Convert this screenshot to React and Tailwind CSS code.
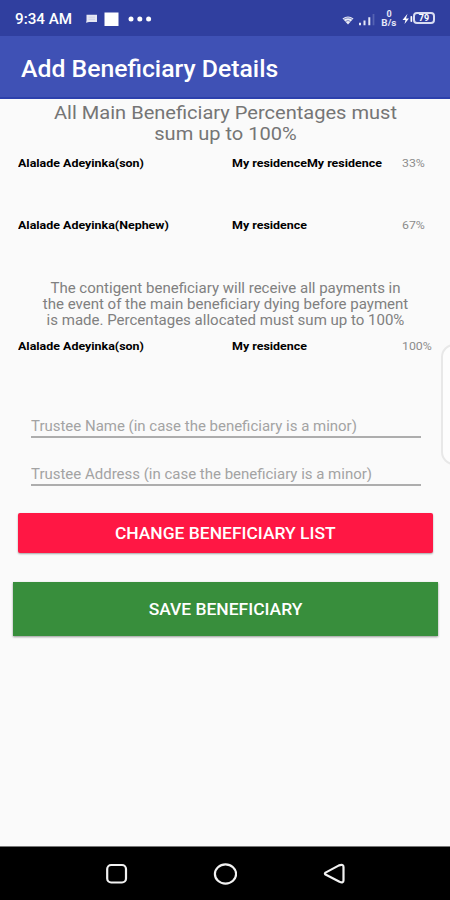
const MAIN_BENEFICIARIES = [
  { name: 'Alalade Adeyinka(son)', address: 'My residenceMy residence', share: '33%' },
  { name: 'Alalade Adeyinka(Nephew)', address: 'My residence', share: '67%' },
]

const CONTINGENT_BENEFICIARIES = [
  { name: 'Alalade Adeyinka(son)', address: 'My residence', share: '100%' },
]

function StatusBar() {
  return (
    <div className="flex h-9 shrink-0 items-center bg-[#303f9f] pt-px pr-[15px] pl-[15px] text-white">
      <span className="w-[70px] origin-left scale-x-[1.085] pt-px text-[14px] font-medium whitespace-nowrap">9:34 AM</span>
      <svg className="h-4 w-[70px]" viewBox="0 0 70 16" fill="#fff">
        <path d="M1.500 3.700h10.500v7.300H4l-3 .8 .5-2z" opacity=".88" />
        <path d="M3.500 6.200h6.500M3.500 8.300h6.500" stroke="#c3c8e6" strokeWidth=".7" />
        <rect x="19.500" y="1.500" width="14" height="13.500" />
        <circle cx="46" cy="8" r="2.500" />
        <circle cx="54.800" cy="8" r="2.500" />
        <circle cx="63.600" cy="8" r="2.500" />
      </svg>
      <svg className="mr-1 ml-auto h-4 w-[35px]" viewBox="0 0 35 16" fill="none">
        <path d="M0.500 7.500Q6 3.300 11.500 7.500L6 13.500z" fill="#fff" opacity=".9" />
        <path d="M1.500 8.500Q6 5.300 10.500 8.500M3.500 10.500Q6 8.500 8.500 10.500" stroke="#303f9f" strokeWidth=".6" />
        <path d="M18 14.300v-2.600M22.500 14.300V9.500M27.300 14.300V6.300" stroke="#e4e7f6" strokeWidth="2" />
        <path d="M31.500 14.300V3" stroke="#5563b2" strokeWidth="1.800" />
      </svg>
      <div className="mt-px flex w-4 flex-col items-center text-[9px] leading-[9px] font-bold text-[#e4e7f6]">
        <span>0</span>
        <span className="scale-x-110">B/s</span>
      </div>
      <svg className="ml-[5px] h-4 w-[11px]" viewBox="0 0 11 16" fill="#fff">
        <path d="M5.500 2.800L0.500 9h3l-1 4L7 7.500H4z" />
        <rect x="8.500" y="5" width="1.700" height="6" rx=".8" />
      </svg>
      <span className="mb-px flex h-3 w-[22px] items-center justify-center rounded-[4px] border-2 border-[#d8dcf2] text-[9px] leading-none font-bold">
        79
      </span>
    </div>
  )
}

function BeneficiaryRow({ name, address, share }) {
  return (
    <div className="flex h-4 items-center pl-[18px] whitespace-nowrap">
      <span className="w-[214px] origin-left scale-x-[1.13] text-[11px] font-bold text-black">{name}</span>
      <span className="w-[170px] origin-left scale-x-[1.13] text-[11px] font-bold text-black">{address}</span>
      <span className="origin-left scale-x-[1.12] text-[11px] text-[#8c8c8c]">{share}</span>
    </div>
  )
}

function TextField({ placeholder }) {
  return (
    <div className="h-6 w-[390px] border-b-2 border-[#adadad]">
      <input
        type="text"
        placeholder={placeholder}
        className="block h-[22px] w-[364px] origin-left scale-x-[1.07] bg-transparent pt-px text-[14px] outline-none placeholder:text-[#a3a3a3]"
      />
    </div>
  )
}

function NavBar() {
  return (
    <div className="mt-auto flex h-[54px] shrink-0 items-center justify-between border-t border-[#777] bg-black px-[104px]">
      <svg className="size-6" viewBox="0 0 24 24" fill="none" stroke="#f2f2f2" strokeWidth="2.200">
        <rect x="3.200" y="3" width="18.800" height="17.500" rx="4" />
      </svg>
      <svg className="size-6" viewBox="0 0 24 24" fill="none" stroke="#f2f2f2" strokeWidth="2.200">
        <ellipse cx="12.500" cy="12" rx="10.600" ry="9.600" />
      </svg>
      <svg className="size-6" viewBox="0 0 24 24" fill="none" stroke="#f2f2f2" strokeWidth="2.200" strokeLinejoin="round">
        <path d="M3.500 10.600L17 3.400Q21.500 1.800 21.500 5V18.200Q21.500 21.500 17.500 19.800L3.500 12.600Q2.300 11.600 3.500 10.600z" />
      </svg>
    </div>
  )
}

export default function App() {
  return (
    <div className="relative flex h-[900px] w-[450px] flex-col overflow-hidden bg-[#fafafa] font-['Roboto',sans-serif]">
      <StatusBar />
      <header className="flex h-[63px] shrink-0 items-center border-b-2 border-[#2c40ac] bg-[#3f51b5] pt-[7px] pl-[21px]">
        <h1 className="origin-left scale-x-[1.077] text-[23px] font-medium whitespace-nowrap text-white">Add Beneficiary Details</h1>
      </header>

      <main className="flex flex-col">
        <p className="mt-[3px] ml-px scale-x-[1.114] text-center text-[18px] leading-[21px] text-[#757575]">
          All Main Beneficiary Percentages must
          <br />
          sum up to 100%
        </p>
        <div className="mt-3 flex flex-col gap-[46px]">
          {MAIN_BENEFICIARIES.map(b => <BeneficiaryRow key={b.name} {...b} />)}
        </div>

        <p className="mt-[46px] ml-px scale-x-[1.073] text-center text-[14px] leading-4 text-[#808080]">
          The contigent beneficiary will receive all payments in
          <br />
          the event of the main beneficiary dying before payment
          <br />
          is made. Percentages allocated must sum up to 100%
        </p>
        <div className="mt-[11px]">
          {CONTINGENT_BENEFICIARIES.map(b => <BeneficiaryRow key={b.name} {...b} />)}
        </div>

        <div className="mt-[59px] ml-[30.500px] flex flex-col gap-6">
          <TextField placeholder="Trustee Name (in case the beneficiary is a minor)" />
          <TextField placeholder="Trustee Address (in case the beneficiary is a minor)" />
        </div>

        <button className="mt-[27px] ml-[18px] h-10 w-[415px] rounded-[2px] bg-[#ff1744] pt-px text-[16px] font-medium text-white shadow-[0_1px_2px_rgba(0,0,0,0.35)]">
          <span className="inline-block scale-x-[1.09]">CHANGE BENEFICIARY LIST</span>
        </button>
        <button className="mt-[29px] ml-[13px] h-[54px] w-[425px] bg-[#388e3c] pt-px text-[16px] font-medium text-white shadow-[0_1px_2px_rgba(0,0,0,0.4)]">
          <span className="inline-block scale-x-[1.09]">SAVE BENEFICIARY</span>
        </button>
      </main>

      {/* Edge panel handle floating over the form */}
      <div className="absolute top-[344px] -right-5 h-[121px] w-[29px] rounded-[13px] border-2 border-[#e8e8e8] bg-[#fdfdfd]" />

      <NavBar />
    </div>
  )
}
